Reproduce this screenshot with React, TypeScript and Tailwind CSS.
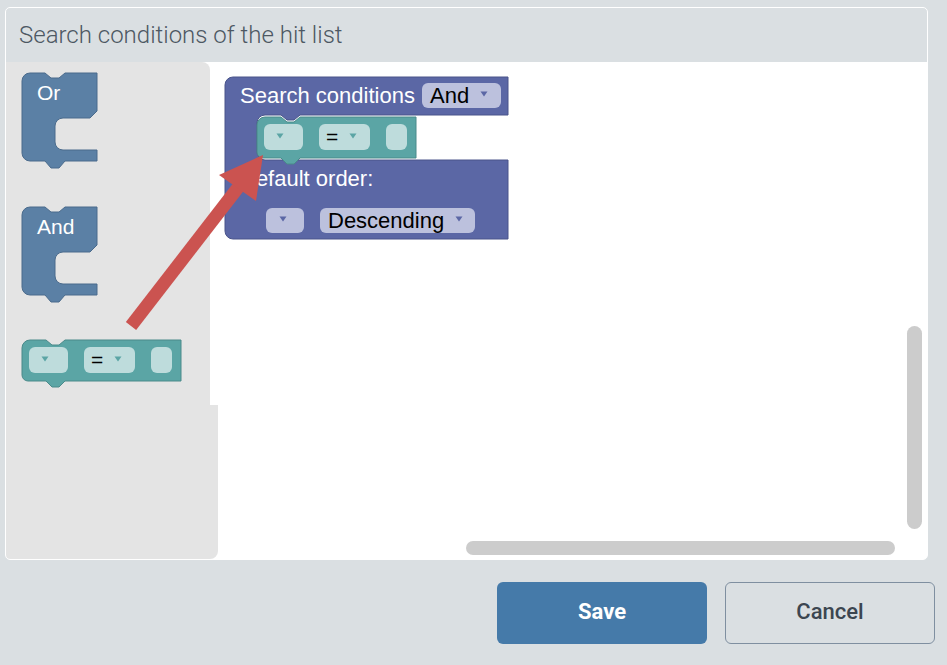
import React from 'react';

const BLOCK_FONT = "'Liberation Sans', Arial, sans-serif";

const Tri: React.FC<{ x: number; y: number; fill: string }> = ({ x, y, fill }) => (
  <polygon points={`${x - 3.5},${y - 2.5} ${x + 3.5},${y - 2.5} ${x},${y + 2.5}`} fill={fill} />
);

// teal comparison block: [▼] [= ▼] [ ]
const CompareBlock: React.FC<{ x: number; y: number }> = ({ x, y }) => {
  const d = `M${x},${y + 8} a8,8 0 0 1 8,-8 H${x + 24} l6,5 h7 l6,-5 H${x + 159} V${y + 41} H${x + 43} l-6,6 h-7 l-6,-6 H${x + 6} a6,6 0 0 1 -6,-6 Z`;
  return (
    <g>
      <path d={d} fill="#5ba5a5" stroke="#4a8a8a" strokeWidth="1" />
      <rect x={x + 7} y={y + 7} width={39} height={26} rx={6} fill="#bedcdc" />
      <Tri x={x + 23} y={y + 19} fill="#5ba5a5" />
      <rect x={x + 62} y={y + 7} width={51} height={26} rx={6} fill="#bedcdc" />
      <text x={x + 69} y={y + 27} fontSize="21" fontFamily={BLOCK_FONT} fill="#000">=</text>
      <Tri x={x + 96} y={y + 19} fill="#5ba5a5" />
      <rect x={x + 129} y={y + 7} width={21} height={26} rx={6} fill="#bedcdc" />
    </g>
  );
};

// blue C-shaped logic block (Or / And)
const LogicBlock: React.FC<{ y: number; label: string }> = ({ y, label }) => {
  const x = 22;
  const d = `M${x},${y + 8} a8,8 0 0 1 8,-8 H${x + 23} l6,5 h8 l6,-5 H${x + 75} V${y + 38} L${x + 68},${y + 45} H${x + 41} a8,8 0 0 0 -8,8 V${y + 69} a8,8 0 0 0 8,8 H${x + 75} V${y + 88} H${x + 43} l-6,7 h-8 l-6,-7 H${x + 8} a8,8 0 0 1 -8,-8 Z`;
  return (
    <g>
      <path d={d} fill="#5b80a5" stroke="#4b6b8c" strokeWidth="1" />
      <text x={x + 15} y={y + 27} fontSize="21" fontFamily={BLOCK_FONT} fill="#fff">{label}</text>
    </g>
  );
};

const Flyout: React.FC = () => (
  <svg width="204" height="343" viewBox="6 62 204 343" className="block">
    <LogicBlock y={73} label="Or" />
    <LogicBlock y={207} label="And" />
    <CompareBlock x={22} y={340} />
  </svg>
);

const Workspace: React.FC = () => (
  <svg width="709" height="497" viewBox="218 62 709 497" className="absolute inset-0">
    <path
      d="M225,85 a8,8 0 0 1 8,-8 H508 V115 H300 l-6,5 h-7 l-6,-5 H265 a8,8 0 0 0 -8,8 V152 a8,8 0 0 0 8,8 H508 V239 H233 a8,8 0 0 1 -8,-8 Z"
      fill="#5b67a5"
      stroke="#4a548a"
      strokeWidth="1"
    />
    <text x={240} y={103} fontSize="22" fontFamily={BLOCK_FONT} fill="#fff">Search conditions</text>
    <rect x={422} y={83} width={79} height={25} rx={6} fill="#bcc1dd" />
    <text x={430} y={103} fontSize="22" fontFamily={BLOCK_FONT} fill="#000">And</text>
    <Tri x={484} y={94} fill="#5b67a5" />

    <text x={240} y={186} fontSize="22" fontFamily={BLOCK_FONT} fill="#fff">Default order:</text>
    <rect x={266} y={208} width={38} height={25} rx={6} fill="#bcc1dd" />
    <Tri x={283} y={219} fill="#5b67a5" />
    <rect x={320} y={208} width={155} height={25} rx={6} fill="#bcc1dd" />
    <text x={328} y={228} fontSize="22" fontFamily={BLOCK_FONT} fill="#000">Descending</text>
    <Tri x={459} y={219} fill="#5b67a5" />

    <CompareBlock x={257} y={117} />
  </svg>
);

const App: React.FC = () => {
  return (
    <div className="relative w-[947px] h-[665px] bg-[#dadfe2] pt-[7px] pl-[5px] overflow-hidden font-['Roboto',sans-serif]">
      <section className="w-[923px] h-[553px] border border-white rounded-[5px] flex flex-col overflow-hidden">
        <header className="h-[54px] shrink-0 flex items-center pl-[13px] text-[24px] font-light text-[#4d5863]">
          Search conditions of the hit list
        </header>
        <div className="flex-1 flex bg-white min-h-0">
          {/* toolbox flyout */}
          <div className="w-[212px] flex flex-col">
            <div className="h-[343px] flex">
              <div className="w-[204px] bg-[#e4e4e4] rounded-tr-[8px] overflow-hidden">
                <Flyout />
              </div>
              <div className="flex-1 bg-white" />
            </div>
            <div className="flex-1 bg-[#e4e4e4] rounded-br-[8px] rounded-bl-[4px]" />
          </div>

          {/* workspace */}
          <div className="flex-1 relative bg-white">
            <Workspace />
            <div className="absolute left-[689px] top-[264px] w-[15px] h-[203px] rounded-full bg-[#cccccc]" />
            <div className="absolute left-[248px] top-[479px] w-[429px] h-[14px] rounded-full bg-[#cccccc]" />
          </div>
        </div>
      </section>

      <div className="flex justify-end gap-[18px] pr-[12px] mt-[22px]">
        <button className="w-[210px] h-[62px] rounded-[6px] bg-[#457aa9] text-white text-[22px] font-bold pb-[3px]">
          Save
        </button>
        <button className="w-[210px] h-[62px] rounded-[6px] border border-[#7f8fa0] text-[#3c4650] text-[22px] font-medium pb-[3px]">
          Cancel
        </button>
      </div>

      {/* red annotation arrow */}
      <svg width="947" height="665" className="absolute left-0 top-0 pointer-events-none">
        <line x1="131" y1="326" x2="240" y2="185" stroke="#cb5350" strokeWidth="13" />
        <polygon points="263,155 219,175 256,201" fill="#cb5350" />
      </svg>
    </div>
  );
};

export default App;
